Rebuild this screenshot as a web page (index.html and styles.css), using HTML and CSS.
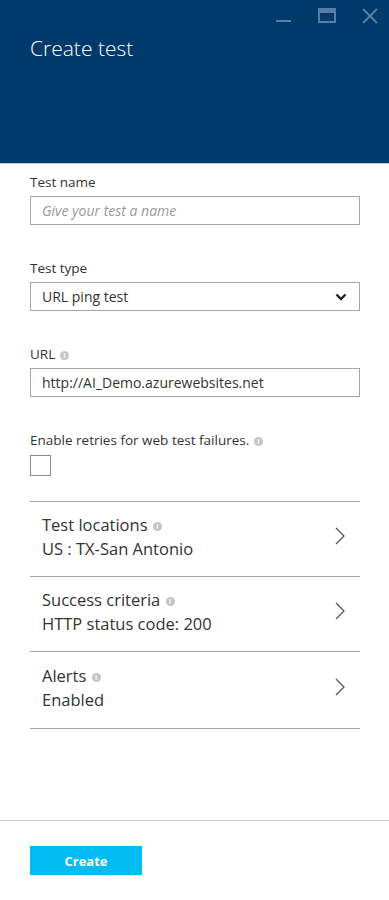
FILE: index.html
```html
<!DOCTYPE html>
<html lang="en">
<head>
  <meta charset="UTF-8">
  <title>Create test</title>
  <meta name="viewport" content="width=device-width, initial-scale=1.0">
  <link rel="stylesheet" href="styles.css">
</head>
<body>
  <div class="blade">
    <header class="blade-header">
      <div class="window-controls">
        <svg class="ctrl" width="16" height="16" viewBox="0 0 16 16"><rect x="0" y="12" width="15" height="2" fill="currentColor"/></svg>
        <svg class="ctrl" width="18" height="16" viewBox="0 0 18 16"><rect x="1" y="1" width="16" height="13" fill="none" stroke="currentColor" stroke-width="2"/><rect x="1" y="1" width="16" height="4" fill="currentColor"/></svg>
        <svg class="ctrl" width="16" height="16" viewBox="0 0 16 16"><path d="M1 1 L15 15 M15 1 L1 15" stroke="currentColor" stroke-width="2"/></svg>
      </div>
      <h1>Create test</h1>
    </header>

    <div class="blade-content">
      <div class="field">
        <label>Test name</label>
        <input type="text" placeholder="Give your test a name">
      </div>

      <div class="field">
        <label>Test type</label>
        <div class="select">
          <span>URL ping test</span>
          <svg width="12" height="8" viewBox="0 0 12 8"><path d="M1.5 1.5 L6 6 L10.5 1.5" fill="none" stroke="#222" stroke-width="2.4"/></svg>
        </div>
      </div>

      <div class="field">
        <label>URL <span class="info">i</span></label>
        <input type="text" value="http://AI_Demo.azurewebsites.net">
      </div>

      <div class="field">
        <label>Enable retries for web test failures. <span class="info">i</span></label>
        <span class="checkbox"></span>
      </div>

      <ul class="nav-list">
        <li>
          <div class="nav-text">
            <div class="nav-title">Test locations <span class="info">i</span></div>
            <div class="nav-value">US : TX-San Antonio</div>
          </div>
          <svg class="chevron" width="10" height="18" viewBox="0 0 10 18"><path d="M1 1 L9 9 L1 17" fill="none" stroke="#555" stroke-width="1.3"/></svg>
        </li>
        <li>
          <div class="nav-text">
            <div class="nav-title">Success criteria <span class="info">i</span></div>
            <div class="nav-value">HTTP status code: 200</div>
          </div>
          <svg class="chevron" width="10" height="18" viewBox="0 0 10 18"><path d="M1 1 L9 9 L1 17" fill="none" stroke="#555" stroke-width="1.3"/></svg>
        </li>
        <li>
          <div class="nav-text">
            <div class="nav-title">Alerts <span class="info">i</span></div>
            <div class="nav-value">Enabled</div>
          </div>
          <svg class="chevron" width="10" height="18" viewBox="0 0 10 18"><path d="M1 1 L9 9 L1 17" fill="none" stroke="#555" stroke-width="1.3"/></svg>
        </li>
      </ul>
    </div>

    <footer class="blade-footer">
      <button type="button">Create</button>
    </footer>
  </div>
</body>
</html>
```

FILE: styles.css
```css
* {
  box-sizing: border-box;
}

body {
  margin: 0;
  font-family: 'Open Sans', 'Noto Sans', sans-serif;
  color: #333333;
  background: #ffffff;
}

.blade {
  width: 389px;
  height: 900px;
  display: flex;
  flex-direction: column;
}

.blade-header {
  height: 164px;
  background: #003a6b;
  border-bottom: 1px solid #c8c8c8;
  padding: 0 30px;
  display: flex;
  flex-direction: column;
}

.window-controls {
  display: flex;
  justify-content: flex-end;
  gap: 26px;
  margin: 8px -19px 0 0;
  color: #587ea3;
}

.blade-header h1 {
  margin: 9px 0 0;
  font-size: 21px;
  font-weight: 300;
  color: #ffffff;
  line-height: 30px;
}

.blade-content {
  flex: 1;
  padding: 9px 29px 0 30px;
}

.field {
  margin-bottom: 34px;
}

.field label {
  display: block;
  font-size: 13.5px;
  line-height: 18px;
  margin-bottom: 5px;
  color: #333333;
}

.info {
  display: inline-block;
  width: 9px;
  height: 9px;
  border-radius: 50%;
  background: #c4c4c4;
  color: #ffffff;
  font-size: 7px;
  font-weight: 700;
  line-height: 9px;
  text-align: center;
  vertical-align: 1px;
  margin-left: 1px;
}

.field input,
.select {
  display: block;
  width: 100%;
  height: 29px;
  border: 1px solid #a6a6a6;
  padding: 0 11px;
  font-family: inherit;
  font-size: 14px;
  color: #333333;
  background: #ffffff;
}

.field input::placeholder {
  color: #9a9a9a;
  font-style: italic;
}

.select {
  display: flex;
  align-items: center;
  justify-content: space-between;
  padding-right: 12px;
}

.checkbox {
  display: block;
  width: 21px;
  height: 21px;
  border: 1px solid #8a8a8a;
  margin-top: 6px;
}

.nav-list {
  list-style: none;
  margin: -9px 0 0;
  padding: 0;
  border-top: 1px solid #a6a6a6;
}

.nav-list li {
  height: 75px;
  border-bottom: 1px solid #a6a6a6;
  padding: 11px 15px 0 12px;
  display: flex;
  justify-content: space-between;
  align-items: flex-start;
}

.nav-list li:last-child {
  height: 77px;
  padding-top: 12px;
}

.nav-title,
.nav-value {
  font-size: 16.5px;
  line-height: 24px;
}

.nav-title .info {
  vertical-align: 2px;
}

.chevron {
  margin-top: 14px;
}

.blade-footer {
  height: 80px;
  border-top: 1px solid #c8c8c8;
  padding: 25px 30px 0;
}

.blade-footer button {
  width: 112px;
  height: 29px;
  border: none;
  background: #00bcf2;
  color: #ffffff;
  font-family: inherit;
  font-size: 13px;
  font-weight: 700;
  cursor: pointer;
}
```
